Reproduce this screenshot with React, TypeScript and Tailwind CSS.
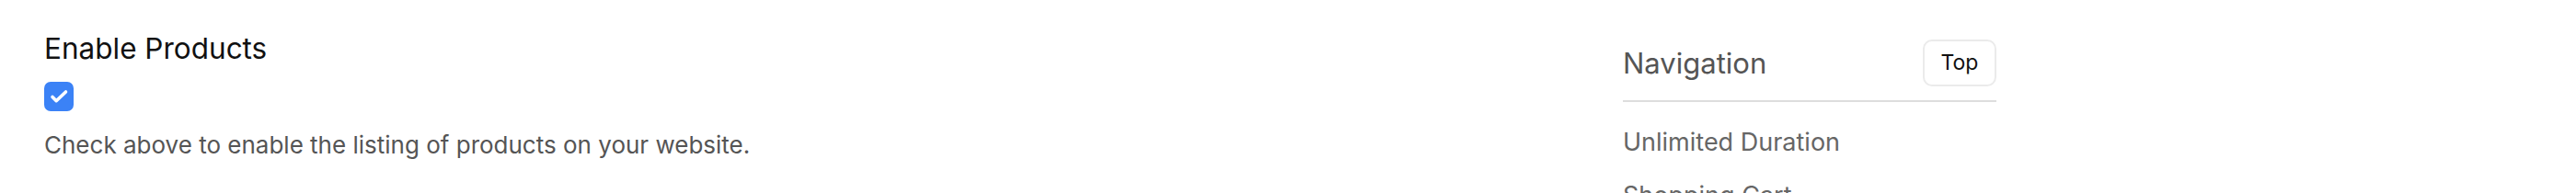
import React from "react";

export default function App() {
  return (
    <div
      className="flex w-[2800px] h-[210px] overflow-hidden bg-white"
      style={{ fontFamily: "Inter, 'Noto Sans', sans-serif" }}
    >
      <main className="w-[1764px] shrink-0 pl-[48px] pt-[34px] flex flex-col items-start">
        <h2 className="text-[31.5px] leading-[38px] font-normal text-[#111111]">Enable Products</h2>
        <div className="mt-[17px] w-[32px] h-[32px] rounded-[7px] bg-[#3b82f6] flex items-center justify-center">
          <svg width="24" height="24" viewBox="0 0 24 24" fill="none">
            <path d="M5 12.5l4.2 4.2L19.5 7" stroke="white" strokeWidth="3.6" strokeLinecap="round" strokeLinejoin="round" />
          </svg>
        </div>
        <p className="mt-[21px] text-[26px] leading-[32px] text-[#555555]">
          Check above to enable the listing of products on your website.
        </p>
      </main>
      <aside className="w-[406px] shrink-0 pt-[43px] flex flex-col">
        <div className="flex items-center justify-between border-b-2 border-[#dddddd] pb-[15px]">
          <span className="text-[31px] leading-[36px] text-[#555555]">Navigation</span>
          <button className="h-[51px] w-[80px] rounded-[10px] border-2 border-[#ebebeb] text-[23px] text-[#111111] bg-white">
            Top
          </button>
        </div>
        <ul className="mt-[28px] flex flex-col gap-[26px] text-[27px] leading-[32px] text-[#666666]">
          <li>Unlimited Duration</li>
          <li>Shopping Cart</li>
        </ul>
      </aside>
    </div>
  );
}
